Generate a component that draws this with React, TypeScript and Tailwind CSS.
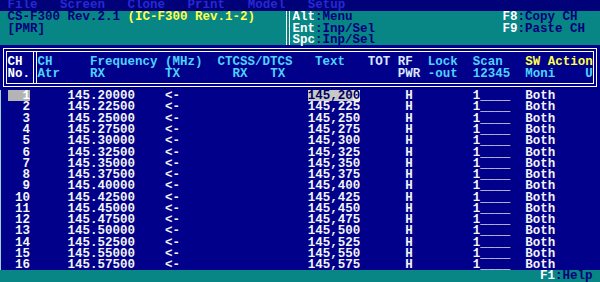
import React from "react";

// [column, text, classes]
type Seg = [number, string, string?];

const CELL = "inline-block h-[11.28px] overflow-visible";

function Line({
  segs,
  className = "",
  lead = "leading-[13.2px]",
}: {
  segs: Seg[];
  className?: string;
  lead?: string;
}) {
  let col = 0;
  const out: React.ReactNode[] = [];
  segs.forEach(([c, text, cls], i) => {
    if (c > col)
      out.push(
        <span key={`g${i}`} className={CELL}>
          {" ".repeat(c - col)}
        </span>
      );
    out.push(
      <span key={i} className={`${CELL} ${cls ?? ""}`}>
        {text}
      </span>
    );
    col = Math.max(col, c) + text.length;
  });
  return (
    <div className={`flex h-[11.28px] whitespace-pre ${lead} ${className}`}>{out}</div>
  );
}

const NAVY_TXT = "text-[#00007c]";
const KEY = "text-white";
const CYAN = "text-[#4ed2ff]";
const PALE = "text-[#dce6ff]";
const YEL = "text-[#ffff4d]";

const menu = ["File", "Screen", "Clone", "Print", "Model", "Setup"];
const menuCols = [1, 8, 17, 25, 33, 41];

const channels = Array.from({ length: 16 }, (_, i) => {
  const f = 145.2 + i * 0.025;
  return {
    ch: i + 1,
    freq: f.toFixed(5),
    text: f.toFixed(3).replace(".", ","),
  };
});

function VDivider({ className = "" }: { className?: string }) {
  return <div className={`border-x border-white ${className}`} />;
}

export default function App() {
  return (
    <div className="flex h-[282px] w-[600px] flex-col overflow-hidden bg-[#00008a] font-['Liberation_Mono',monospace] text-[12.5px] font-bold text-white">
      {/* menu bar */}
      <Line
        lead="leading-[11.28px]"
        className="bg-[#000078] text-[#2828d4]"
        segs={menu.map((m, i) => [menuCols[i], m] as Seg)}
      />

      {/* model / key help panel */}
      <div className="flex bg-[#088585]">
        <div className="w-[286px]">
          <Line
            segs={[
              [1, "CS-F300 Rev.2.1", NAVY_TXT],
              [17, "(IC-F300 Rev.1-2)", YEL],
            ]}
          />
          <Line segs={[[1, "[PMR]", NAVY_TXT]]} />
          <Line segs={[]} />
        </div>
        <VDivider className="w-[4px]" />
        <div className="flex-1 pl-[2.5px]">
          <Line
            segs={[
              [0, "Alt", KEY],
              [3, ":Menu", NAVY_TXT],
              [28, "F8", KEY],
              [30, ":Copy CH", NAVY_TXT],
            ]}
          />
          <Line
            segs={[
              [0, "Ent", KEY],
              [3, ":Inp/Sel", NAVY_TXT],
              [28, "F9", KEY],
              [30, ":Paste CH", NAVY_TXT],
            ]}
          />
          <Line
            segs={[
              [0, "Spc", KEY],
              [3, ":Inp/Sel", NAVY_TXT],
            ]}
          />
        </div>
      </div>

      {/* column header box */}
      <div className="h-[45.12px] pt-[2.88px]">
        <div className="mx-[3px] border border-white p-[2px]">
          <div className="flex border border-white">
            <div className="w-[26px] pb-[4.04px] pl-[0.5px] pt-[4.4px]">
              <Line segs={[[0, "CH", "text-white"]]} />
              <Line segs={[[0, "No.", "text-white"]]} />
            </div>
            <VDivider className="w-[4px]" />
            <div className="flex-1 pb-[4.04px] pl-[0.5px] pt-[4.4px]">
              <Line
                segs={[
                  [0, "CH", CYAN],
                  [7, "Frequency (MHz)", CYAN],
                  [24, "CTCSS/DTCS", CYAN],
                  [37, "Text", CYAN],
                  [44, "TOT", PALE],
                  [48, "RF", PALE],
                  [52, "Lock", CYAN],
                  [58, "Scan", CYAN],
                  [65, "SW Action", YEL],
                ]}
              />
              <Line
                segs={[
                  [0, "Atr", CYAN],
                  [7, "RX", CYAN],
                  [17, "TX", CYAN],
                  [26, "RX", CYAN],
                  [31, "TX", CYAN],
                  [48, "PWR", PALE],
                  [52, "-out", CYAN],
                  [58, "12345", CYAN],
                  [65, "Moni", CYAN],
                  [73, "U", CYAN],
                ]}
              />
            </div>
          </div>
        </div>
      </div>

      {/* channel rows */}
      <div className="shadow-[inset_1px_0_0_#9fd3d3]">
        {channels.map((c) => {
          const first = c.ch === 1;
          return (
            <Line
              key={c.ch}
              className="text-[#f4f4f4]"
              segs={[
                [1, String(c.ch).padStart(3), first ? "bg-[#b4b4b4] text-white" : ""],
                [9, c.freq],
                [22, "<-"],
                ...(first
                  ? ([
                      [41, c.text.slice(0, 6), "bg-[#c8c8c8] text-[#000060]"],
                      [47, c.text.slice(6), "bg-[#ececec] text-[#000060]"],
                    ] as Seg[])
                  : ([[41, c.text]] as Seg[])),
                [54, "H"],
                [63, "1____"],
                [70, "Both"],
              ]}
            />
          );
        })}
      </div>

      {/* status bar */}
      <Line
        className="bg-[#088585]"
        segs={[
          [72, "F1", KEY],
          [74, ":Help", NAVY_TXT],
        ]}
      />
    </div>
  );
}
